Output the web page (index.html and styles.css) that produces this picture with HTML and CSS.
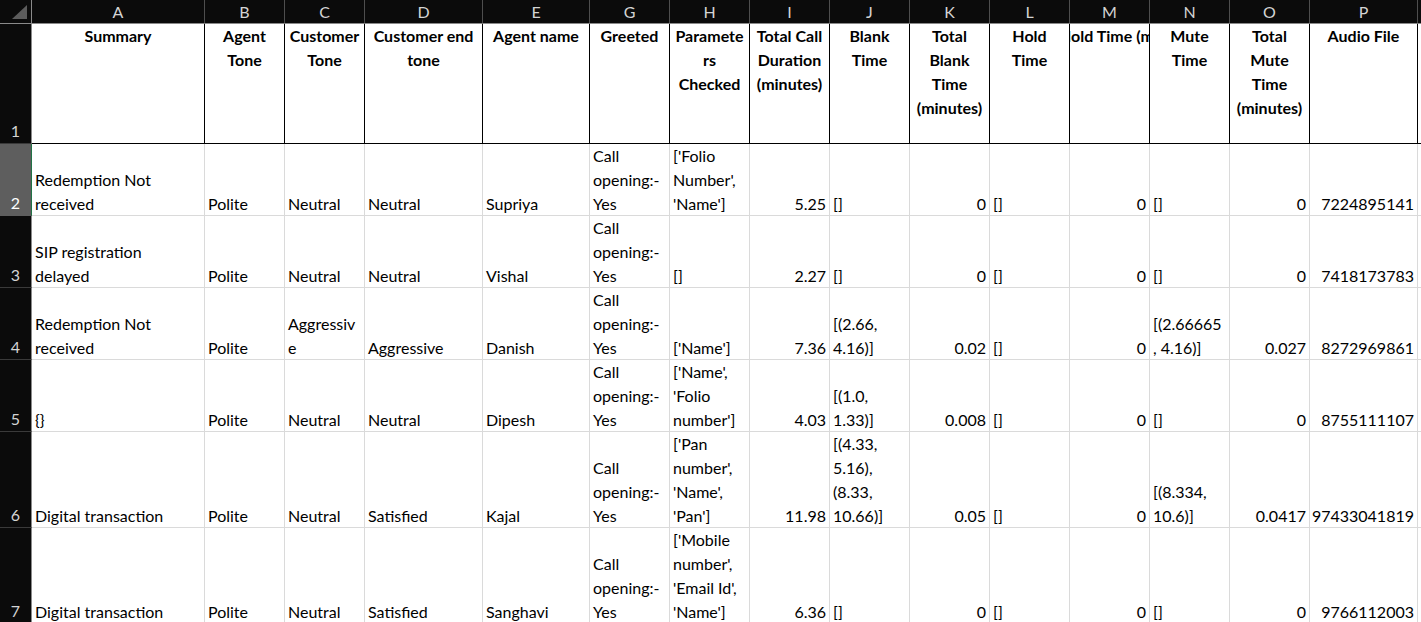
FILE: index.html
```html
<!DOCTYPE html>
<html>
<head>
<meta charset="utf-8">
<link rel="stylesheet" href="styles.css">
</head>
<body>
<div class="sheet">
  <!-- column headers -->
  <div class="corner"><svg width="31" height="23" viewBox="0 0 31 23"><polygon points="12,19 27,19 27,5" fill="#5c5c5c"/></svg></div>
  <div class="ch">A</div><div class="ch">B</div><div class="ch">C</div><div class="ch">D</div><div class="ch">E</div><div class="ch">G</div><div class="ch">H</div><div class="ch">I</div><div class="ch">J</div><div class="ch">K</div><div class="ch">L</div><div class="ch">M</div><div class="ch">N</div><div class="ch">O</div><div class="ch">P</div><div class="ch"></div>

  <!-- row 1 -->
  <div class="rh">1</div>
  <div class="hd"><span>Summary</span></div>
  <div class="hd"><span>Agent<br>Tone</span></div>
  <div class="hd"><span>Customer<br>Tone</span></div>
  <div class="hd"><span>Customer end<br>tone</span></div>
  <div class="hd"><span>Agent name</span></div>
  <div class="hd"><span>Greeted</span></div>
  <div class="hd"><span>Paramete<br>rs<br>Checked</span></div>
  <div class="hd"><span>Total Call<br>Duration<br>(minutes)</span></div>
  <div class="hd"><span>Blank<br>Time</span></div>
  <div class="hd"><span>Total<br>Blank<br>Time<br>(minutes)</span></div>
  <div class="hd"><span>Hold<br>Time</span></div>
  <div class="hd clip"><span>Hold Time (minutes)</span></div>
  <div class="hd"><span>Mute<br>Time</span></div>
  <div class="hd"><span>Total<br>Mute<br>Time<br>(minutes)</span></div>
  <div class="hd"><span>Audio File</span></div>
  <div class="c blank"></div>

  <!-- row 2 -->
  <div class="rh sel">2</div>
  <div class="c"><span>Redemption Not<br>received</span></div>
  <div class="c"><span>Polite</span></div>
  <div class="c"><span>Neutral</span></div>
  <div class="c"><span>Neutral</span></div>
  <div class="c"><span>Supriya</span></div>
  <div class="c"><span>Call<br>opening:-<br>Yes</span></div>
  <div class="c"><span>['Folio<br>Number',<br>'Name']</span></div>
  <div class="c num"><span>5.25</span></div>
  <div class="c"><span>[]</span></div>
  <div class="c num"><span>0</span></div>
  <div class="c"><span>[]</span></div>
  <div class="c num"><span>0</span></div>
  <div class="c"><span>[]</span></div>
  <div class="c num"><span>0</span></div>
  <div class="c num"><span>7224895141</span></div>
  <div class="c"></div>

  <!-- row 3 -->
  <div class="rh">3</div>
  <div class="c"><span>SIP registration<br>delayed</span></div>
  <div class="c"><span>Polite</span></div>
  <div class="c"><span>Neutral</span></div>
  <div class="c"><span>Neutral</span></div>
  <div class="c"><span>Vishal</span></div>
  <div class="c"><span>Call<br>opening:-<br>Yes</span></div>
  <div class="c"><span>[]</span></div>
  <div class="c num"><span>2.27</span></div>
  <div class="c"><span>[]</span></div>
  <div class="c num"><span>0</span></div>
  <div class="c"><span>[]</span></div>
  <div class="c num"><span>0</span></div>
  <div class="c"><span>[]</span></div>
  <div class="c num"><span>0</span></div>
  <div class="c num"><span>7418173783</span></div>
  <div class="c"></div>

  <!-- row 4 -->
  <div class="rh">4</div>
  <div class="c"><span>Redemption Not<br>received</span></div>
  <div class="c"><span>Polite</span></div>
  <div class="c"><span>Aggressiv<br>e</span></div>
  <div class="c"><span>Aggressive</span></div>
  <div class="c"><span>Danish</span></div>
  <div class="c"><span>Call<br>opening:-<br>Yes</span></div>
  <div class="c"><span>['Name']</span></div>
  <div class="c num"><span>7.36</span></div>
  <div class="c"><span>[(2.66,<br>4.16)]</span></div>
  <div class="c num"><span>0.02</span></div>
  <div class="c"><span>[]</span></div>
  <div class="c num"><span>0</span></div>
  <div class="c"><span>[(2.66665<br>, 4.16)]</span></div>
  <div class="c num"><span>0.027</span></div>
  <div class="c num"><span>8272969861</span></div>
  <div class="c"></div>

  <!-- row 5 -->
  <div class="rh">5</div>
  <div class="c"><span>{}</span></div>
  <div class="c"><span>Polite</span></div>
  <div class="c"><span>Neutral</span></div>
  <div class="c"><span>Neutral</span></div>
  <div class="c"><span>Dipesh</span></div>
  <div class="c"><span>Call<br>opening:-<br>Yes</span></div>
  <div class="c"><span>['Name',<br>'Folio<br>number']</span></div>
  <div class="c num"><span>4.03</span></div>
  <div class="c"><span>[(1.0,<br>1.33)]</span></div>
  <div class="c num"><span>0.008</span></div>
  <div class="c"><span>[]</span></div>
  <div class="c num"><span>0</span></div>
  <div class="c"><span>[]</span></div>
  <div class="c num"><span>0</span></div>
  <div class="c num"><span>8755111107</span></div>
  <div class="c"></div>

  <!-- row 6 -->
  <div class="rh">6</div>
  <div class="c"><span>Digital transaction</span></div>
  <div class="c"><span>Polite</span></div>
  <div class="c"><span>Neutral</span></div>
  <div class="c"><span>Satisfied</span></div>
  <div class="c"><span>Kajal</span></div>
  <div class="c"><span>Call<br>opening:-<br>Yes</span></div>
  <div class="c"><span>['Pan<br>number',<br>'Name',<br>'Pan']</span></div>
  <div class="c num"><span>11.98</span></div>
  <div class="c"><span>[(4.33,<br>5.16),<br>(8.33,<br>10.66)]</span></div>
  <div class="c num"><span>0.05</span></div>
  <div class="c"><span>[]</span></div>
  <div class="c num"><span>0</span></div>
  <div class="c"><span>[(8.334,<br>10.6)]</span></div>
  <div class="c num"><span>0.0417</span></div>
  <div class="c num"><span>97433041819</span></div>
  <div class="c"></div>

  <!-- row 7 -->
  <div class="rh">7</div>
  <div class="c"><span>Digital transaction</span></div>
  <div class="c"><span>Polite</span></div>
  <div class="c"><span>Neutral</span></div>
  <div class="c"><span>Satisfied</span></div>
  <div class="c"><span>Sanghavi</span></div>
  <div class="c"><span>Call<br>opening:-<br>Yes</span></div>
  <div class="c"><span>['Mobile<br>number',<br>'Email Id',<br>'Name']</span></div>
  <div class="c num"><span>6.36</span></div>
  <div class="c"><span>[]</span></div>
  <div class="c num"><span>0</span></div>
  <div class="c"><span>[]</span></div>
  <div class="c num"><span>0</span></div>
  <div class="c"><span>[]</span></div>
  <div class="c num"><span>0</span></div>
  <div class="c num"><span>9766112003</span></div>
  <div class="c"></div>
</div>
</body>
</html>
```

FILE: styles.css
```css
html, body {
  margin: 0;
  padding: 0;
  background: #ffffff;
  overflow: hidden;
}

.sheet {
  display: grid;
  grid-template-columns: 32px 173px 80px 80px 118px 107px 80px 80px 80px 80px 80px 80px 80px 80px 80px 108px 1fr;
  grid-template-rows: 24px 120px 72px 72px 72px 72px 96px 96px;
  width: 1421px;
  height: 622px;
  overflow: hidden;
  font-family: Lato, "Open Sans", sans-serif;
  font-size: 16px;
  line-height: 24px;
  color: #000;
}

.sheet > div {
  box-sizing: border-box;
  overflow: hidden;
  white-space: nowrap;
}

.corner {
  background: #0b0b0b;
  border-right: 1px solid #8a8a8a;
  border-bottom: 1px solid #8a8a8a;
}
.corner svg { display: block; }

.ch {
  background: #0b0b0b;
  color: #d4d4d4;
  border-right: 1px solid #4e4e4e;
  border-bottom: 1px solid #8a8a8a;
  display: flex;
  align-items: center;
  justify-content: center;
  line-height: 23px;
}

.rh {
  background: #0b0b0b;
  color: #d4d4d4;
  border-right: 1px solid #8a8a8a;
  border-bottom: 1px solid #3a3a3a;
  display: flex;
  align-items: flex-end;
  justify-content: center;
}
.rh.sel {
  background: #5e5e5e;
  color: #ffffff;
  border-right: 1px solid #217346;
  border-bottom: 1px solid #5e5e5e;
}

.hd {
  font-weight: 700;
  border-right: 1px solid #000;
  border-bottom: 1px solid #000;
  display: flex;
  align-items: flex-start;
  justify-content: center;
  text-align: center;
}
.hd.clip {
  justify-content: flex-start;
}
.hd.clip span {
  margin-left: -11px;
}

.c {
  border-right: 1px solid #dadada;
  border-bottom: 1px solid #dadada;
  display: flex;
  align-items: flex-end;
  justify-content: flex-start;
  padding: 0 3px 0 3px;
}
.c span {
  position: relative;
  top: 1px;
}
.c.num {
  justify-content: flex-end;
  padding-right: 3px;
}
.c.blank {
  border-right: none;
  border-bottom: 1px solid #000;
}
```
